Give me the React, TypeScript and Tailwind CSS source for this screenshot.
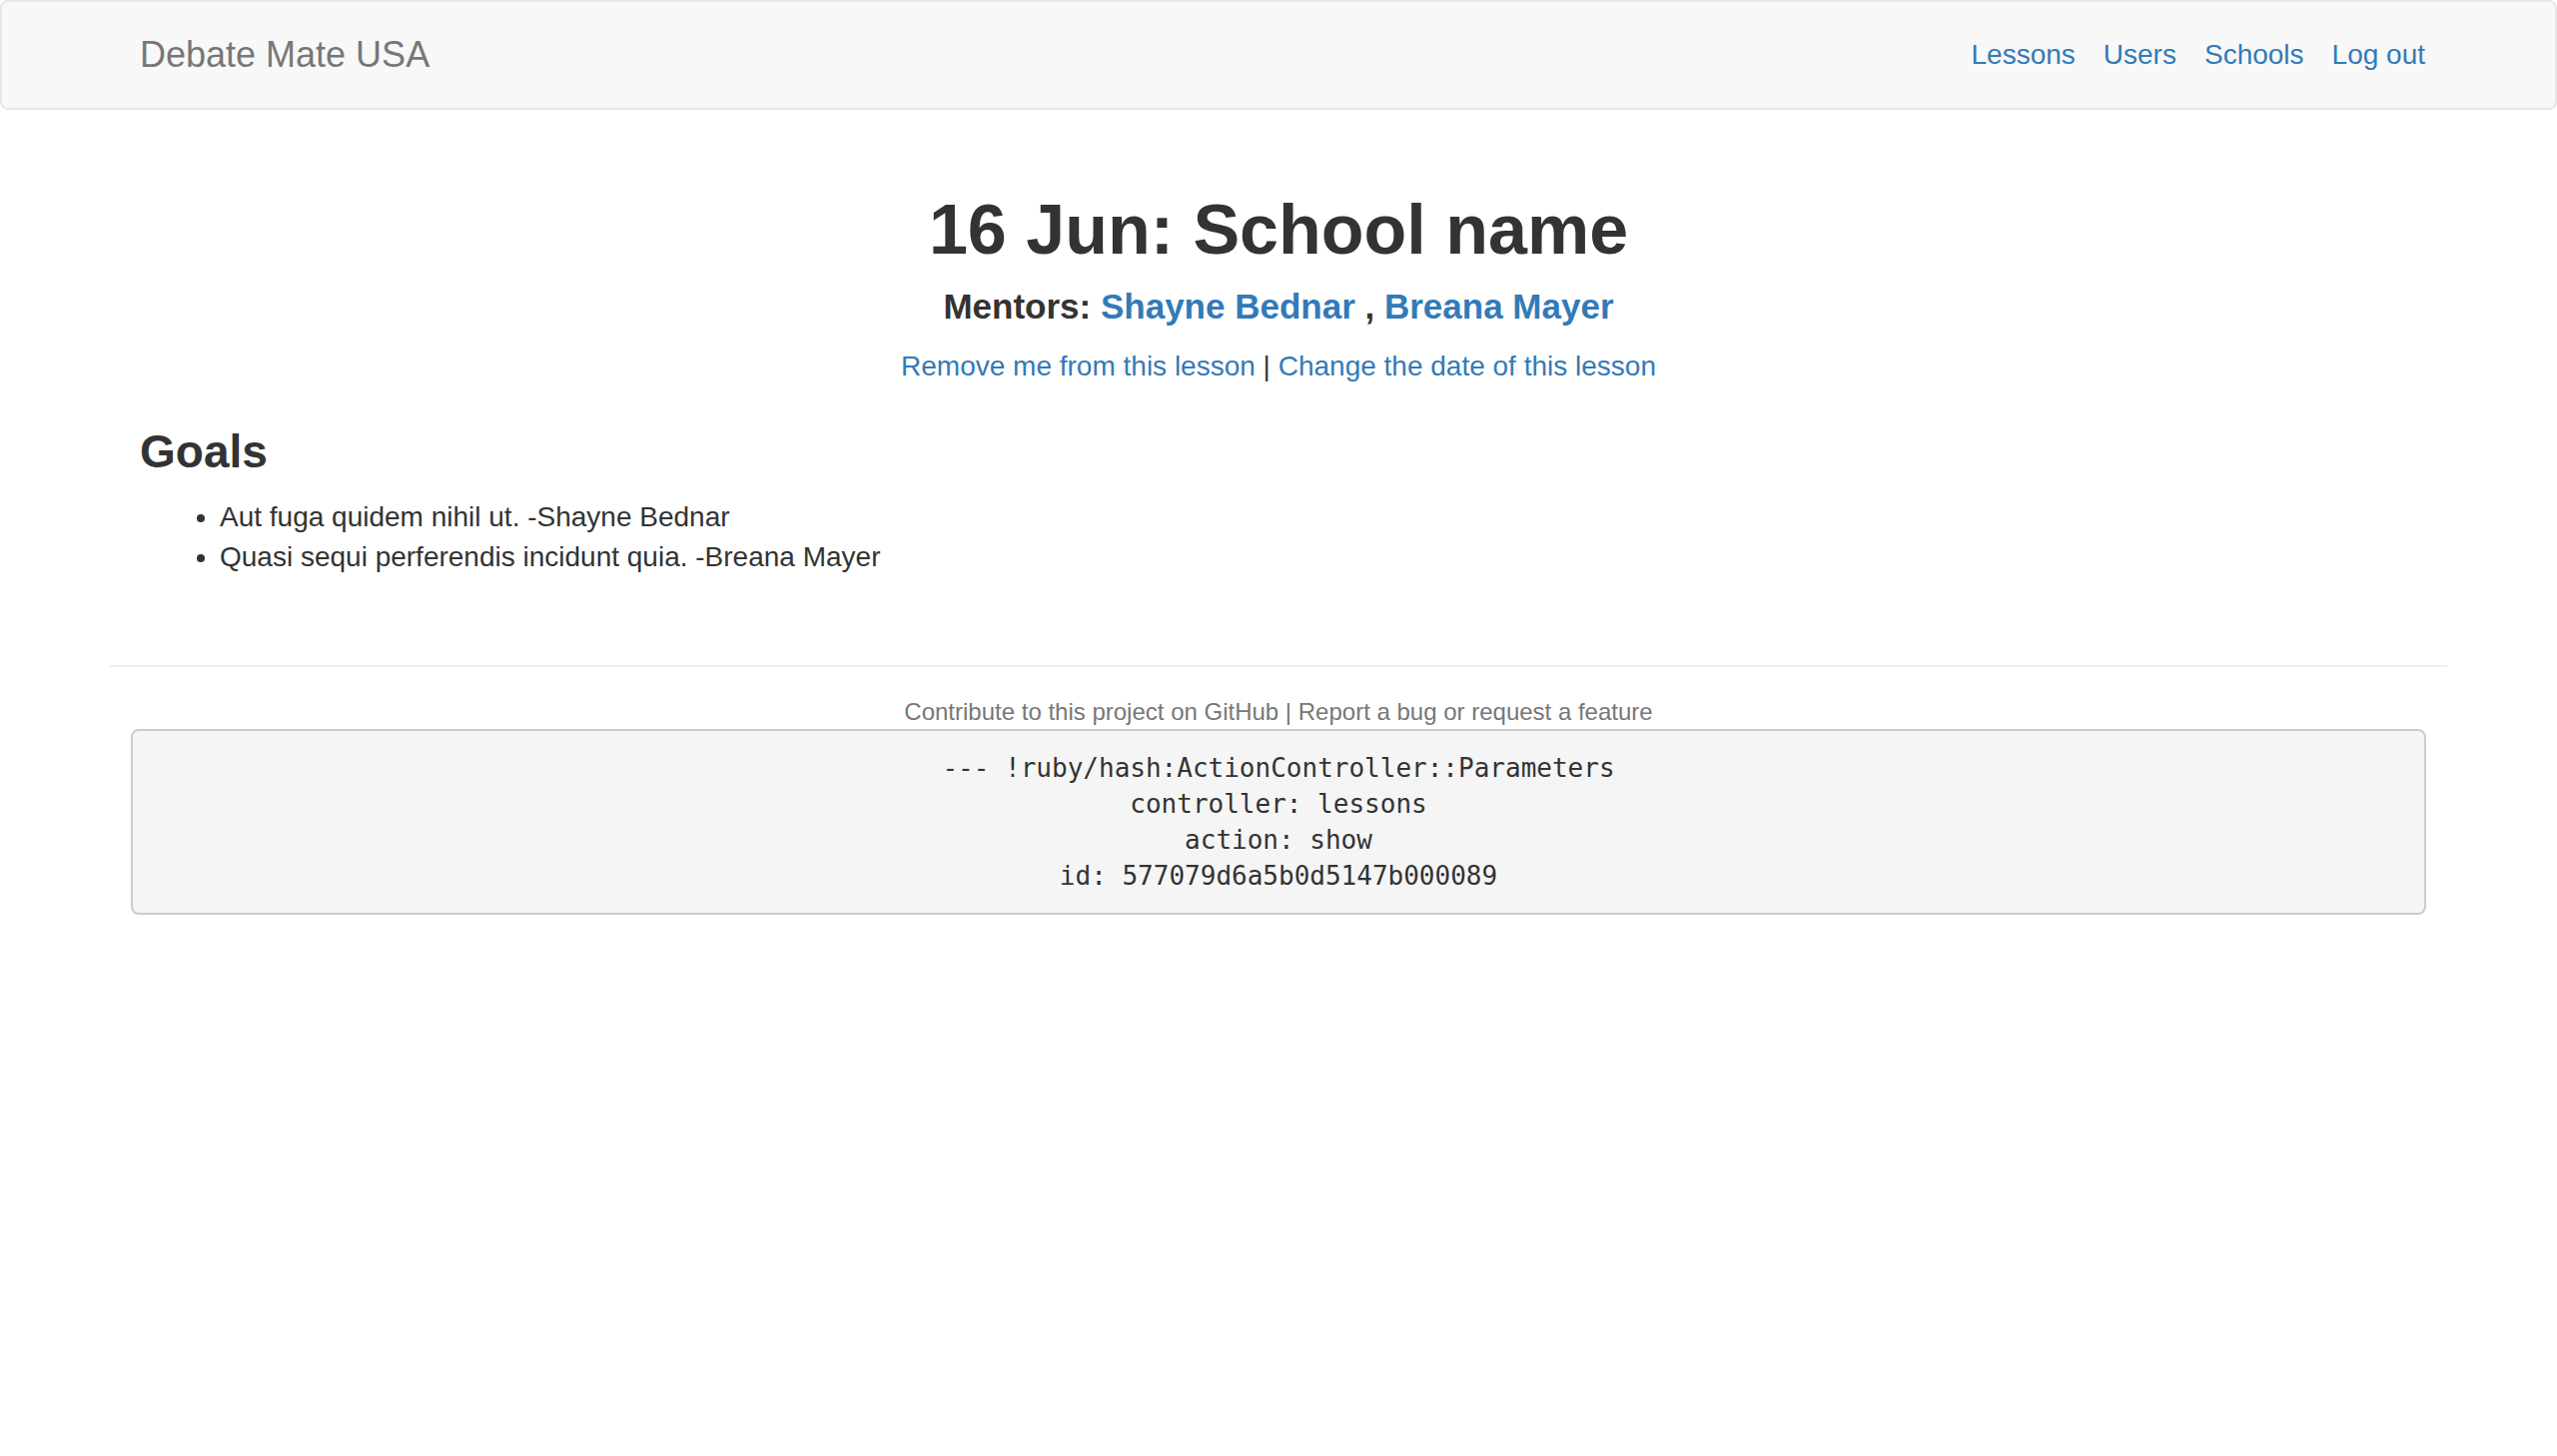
const sans = "font-['Helvetica_Neue','Liberation_Sans',Arial,sans-serif]";

function Navbar() {
  return (
    <nav className="h-[110px] rounded-lg border-2 border-[#e7e7e7] bg-[#f8f8f8]">
      <div className="mx-auto flex h-full w-[2340px] items-center justify-between px-[30px]">
        <a href="#" className="text-[36px] leading-[40px] text-[#777]">
          Debate Mate USA
        </a>
        <ul className="-mr-[8px] flex items-center gap-[28px] text-[28px] leading-[40px] text-[#337ab7]">
          <li><a href="#">Lessons</a></li>
          <li><a href="#">Users</a></li>
          <li><a href="#">Schools</a></li>
          <li><a href="#">Log out</a></li>
        </ul>
      </div>
    </nav>
  );
}

function LessonHeader() {
  return (
    <div className="text-center">
      <h1 className="mt-[81px] text-[70px] font-bold leading-[79px] text-[#333]">
        16 Jun: School name
      </h1>
      <h4 className="mt-[17px] text-[35px] font-bold leading-[40px] text-[#333]">
        Mentors: <a href="#" className="text-[#337ab7]">Shayne Bednar</a> ,{" "}
        <a href="#" className="text-[#337ab7]">Breana Mayer</a>
      </h4>
      <p className="mt-[20px] text-[28px] leading-[40px] text-[#333]">
        <a href="#" className="text-[#337ab7]">Remove me from this lesson</a> |{" "}
        <a href="#" className="text-[#337ab7]">Change the date of this lesson</a>
      </p>
    </div>
  );
}

function Goals() {
  const goals = [
    "Aut fuga quidem nihil ut. -Shayne Bednar",
    "Quasi sequi perferendis incidunt quia. -Breana Mayer",
  ];
  return (
    <section className="mt-[39px]">
      <h3 className="text-[46px] font-bold leading-[53px] text-[#333]">Goals</h3>
      <ul className="mt-[19px] list-disc pl-[80px] text-[28px] leading-[40px] text-[#333]">
        {goals.map((g) => (
          <li key={g}>{g}</li>
        ))}
      </ul>
    </section>
  );
}

export default function App() {
  return (
    <div className={`min-h-screen bg-white ${sans}`}>
      <Navbar />
      <main className="mx-auto w-[2340px] px-[30px]">
        <LessonHeader />
        <Goals />
      </main>
      <footer className="mx-auto mt-[88px] w-[2340px]">
        <hr className="border-t-2 border-[#eee]" />
        <p className="mt-[28px] text-center text-[24px] leading-[34px] text-[#777]">
          <a href="#">Contribute to this project on GitHub</a> |{" "}
          <a href="#">Report a bug or request a feature</a>
        </p>
      </footer>
      <pre className="mx-auto w-[2298px] rounded-lg border-2 border-[#ccc] bg-[#f5f5f5] px-[19px] py-[19px] text-center font-['DejaVu_Sans_Mono',Menlo,monospace] text-[26px] leading-[36px] text-[#333]">
        {`--- !ruby/hash:ActionController::Parameters
controller: lessons
action: show
id: 577079d6a5b0d5147b000089`}
      </pre>
    </div>
  );
}
